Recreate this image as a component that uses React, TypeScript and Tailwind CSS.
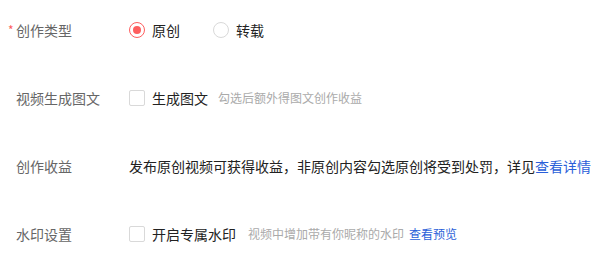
import React from 'react'

const font = { fontFamily: '"Noto Sans CJK SC", "Noto Sans", sans-serif' }

function Label({ text, required }: { text: string; required?: boolean }) {
  return (
    <div className="flex w-[129px] shrink-0 items-center pl-[8px] text-[14px] text-[#666]">
      <span className="w-[8px] text-[12px] text-[#fe5e5e]">{required ? '*' : ''}</span>
      <span>{text}</span>
    </div>
  )
}

function Radio({ checked, label }: { checked?: boolean; label: string }) {
  return (
    <label className="flex items-center">
      <span
        className={
          'flex h-[16px] w-[16px] items-center justify-center rounded-full border ' +
          (checked ? 'border-[#fe5e5e]' : 'border-[#d9d9d9]')
        }
      >
        {checked && <span className="h-[8px] w-[8px] rounded-full bg-[#fe5e5e]" />}
      </span>
      <span className="ml-[7px] text-[14px] text-[#222]">{label}</span>
    </label>
  )
}

function Checkbox({ label }: { label: string }) {
  return (
    <label className="flex items-center">
      <span className="h-[16px] w-[16px] rounded-[2px] border border-[#d9d9d9] bg-white" />
      <span className="ml-[7px] text-[14px] text-[#222]">{label}</span>
    </label>
  )
}

export default function App() {
  return (
    <div className="h-[260px] w-[598px] overflow-hidden bg-white pt-[8px]" style={font}>
      <div className="mb-[24px] flex h-[44px] items-center">
        <Label text="创作类型" required />
        <div className="flex items-center gap-[33px]">
          <Radio checked label="原创" />
          <Radio label="转载" />
        </div>
      </div>

      <div className="mb-[24px] flex h-[44px] items-center">
        <Label text="视频生成图文" />
        <Checkbox label="生成图文" />
        <span className="ml-[10px] text-[12px] text-[#aaa]">勾选后额外得图文创作收益</span>
      </div>

      <div className="mb-[24px] flex h-[44px] items-center">
        <Label text="创作收益" />
        <span className="whitespace-nowrap text-[14px] text-[#222]">
          发布原创视频可获得收益，非原创内容勾选原创将受到处罚，详见
          <span className="text-[#2b5fd9]">查看详情</span>
        </span>
      </div>

      <div className="flex h-[44px] items-center">
        <Label text="水印设置" />
        <Checkbox label="开启专属水印" />
        <span className="ml-[12px] text-[12px] text-[#aaa]">视频中增加带有你昵称的水印</span>
        <span className="ml-[5px] text-[12px] text-[#2b5fd9]">查看预览</span>
      </div>
    </div>
  )
}
